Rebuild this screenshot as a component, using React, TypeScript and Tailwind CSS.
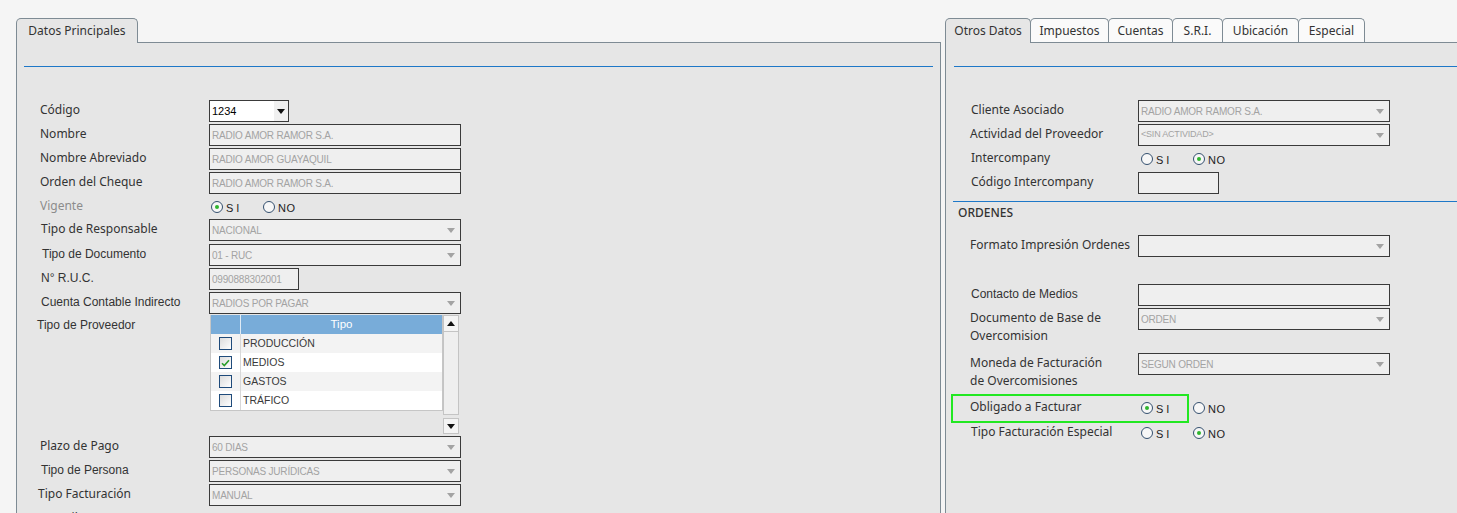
import React from "react";

const SANS = "font-['Noto_Sans',sans-serif]";
const ARIAL = "font-['Liberation_Sans',Arial,sans-serif]";

function Caret({ color = "#a3a3a3" }: { color?: string }) {
  return (
    <svg width="8" height="5" viewBox="0 0 8 5" className="flex-none">
      <path d="M0 0h8L4 5z" fill={color} />
    </svg>
  );
}

function Box({
  value = "",
  w = "w-[252px]",
  select = false,
  small = false,
}: {
  value?: string;
  w?: string;
  select?: boolean;
  small?: boolean;
}) {
  return (
    <div className={`${w} flex h-[22px] flex-none items-center border border-[#3a3a3a] bg-[#efefef] pl-[2px] pr-[5px]`}>
      <span
        className={`flex-1 truncate ${ARIAL} ${small ? "text-[9px]" : "text-[10px]"} tracking-[-0.2px] text-[#a3a3a3]`}
      >
        {value}
      </span>
      {select ? <Caret /> : null}
    </div>
  );
}

function Radio({ on = false, label }: { on?: boolean; label: string }) {
  return (
    <div className="flex w-[52px] flex-none items-center">
      <span className="flex h-[12px] w-[12px] items-center justify-center rounded-full border border-[#34506f] bg-[#f7f7f7]">
        {on ? <span className="h-[4px] w-[4px] rounded-full bg-[#2fb52f]" /> : null}
      </span>
      <span
        className={`mt-[3px] ml-[3px] ${ARIAL} text-[11px] text-[#222] ${label === "SI" ? "tracking-[3px]" : "tracking-[0.5px]"}`}
      >
        {label}
      </span>
    </div>
  );
}

function Radios({ si, pl = "pl-[2px]" }: { si: boolean; pl?: string }) {
  return (
    <div className={`flex h-[22px] items-center ${pl}`}>
      <Radio on={si} label="SI" />
      <Radio on={!si} label="NO" />
    </div>
  );
}

function Row({
  label,
  h,
  lcls = "pl-[23px]",
  children,
}: {
  label: React.ReactNode;
  h: string;
  lcls?: string;
  children?: React.ReactNode;
}) {
  return (
    <div className={`flex flex-none items-start ${h}`}>
      <div className={`flex h-[22px] w-[192px] flex-none items-center pb-[2px] text-[12px] text-[#333] ${lcls}`}>
        {label}
      </div>
      {children}
    </div>
  );
}

function Check({ on = false }: { on?: boolean }) {
  return (
    <span className="flex h-[13px] w-[13px] items-center justify-center border border-[#1f4b7b] bg-gradient-to-br from-[#dcdcdc] to-white">
      {on ? (
        <svg width="9" height="8" viewBox="0 0 9 8">
          <path d="M1 4.2l2.3 2.3L8 1.3" fill="none" stroke="#2a9d2a" strokeWidth="1.6" />
        </svg>
      ) : null}
    </span>
  );
}

function GridRow({ text, on = false, alt = false }: { text: string; on?: boolean; alt?: boolean }) {
  return (
    <div className={`flex h-[19px] ${alt ? "bg-[#f3f3f3]" : "bg-white"}`}>
      <div className="flex w-[30px] flex-none items-center justify-center border-r border-[#d8d8d8]">
        <Check on={on} />
      </div>
      <div className={`flex items-center pl-[2px] ${ARIAL} text-[10.5px] text-[#3a3a3a]`}>{text}</div>
    </div>
  );
}

function Tab({
  children,
  w,
  active = false,
  first = false,
}: {
  children: React.ReactNode;
  w: string;
  active?: boolean;
  first?: boolean;
}) {
  return (
    <div
      className={`${w} relative flex flex-none items-start justify-center rounded-t-[5px] border border-b-0 border-[#7e8b94] pt-[3px] ${SANS} text-[12px] text-[#333] ${
        active ? "z-20 h-[25px] bg-[#e6e6e6]" : "z-10 h-[24px] bg-[#fafafa]"
      } ${first ? "" : "-ml-px"}`}
    >
      {children}
    </div>
  );
}

export default function App() {
  return (
    <div className={`flex h-[513px] w-full gap-[4px] overflow-hidden bg-[#f5f5f5] pt-[18px] pl-[16px] ${SANS}`}>
      {/* Datos principales */}
      <div className="flex w-[925px] flex-none flex-col">
        <div className="flex h-[25px] flex-none items-start">
          <Tab w="w-[122px]" active first>
            Datos Principales
          </Tab>
        </div>
        <div className="-mt-px flex h-[490px] flex-none flex-col border border-[#7e8b94] bg-[#e6e6e6]">
          <div className="mx-[7px] mt-[23px] h-px flex-none bg-[#1e78c8]" />
          <div className="mt-[33px] flex flex-none flex-col">
            <Row label="Código" h="h-[24px]">
              <div className="flex h-[22px] w-[80px] items-center border border-[#3a3a3a] bg-white pl-[2px]">
                <span className={`flex-1 ${ARIAL} text-[11px] text-black`}>1234</span>
                <span className="flex h-full w-[14px] items-center justify-center bg-[#f0f0f0]">
                  <Caret color="#111" />
                </span>
              </div>
            </Row>
            <Row label="Nombre" h="h-[24px]">
              <Box value="RADIO AMOR RAMOR S.A." />
            </Row>
            <Row label="Nombre Abreviado" h="h-[24px]">
              <Box value="RADIO AMOR GUAYAQUIL" />
            </Row>
            <Row label="Orden del Cheque" h="h-[24px]">
              <Box value="RADIO AMOR RAMOR S.A." />
            </Row>
            <Row label="Vigente" h="h-[23px]" lcls="pl-[23px] text-[#8c8c8c]!">
              <Radios si />
            </Row>
            <Row label="Tipo de Responsable" h="h-[25px]" lcls="pl-[24px]">
              <Box value="NACIONAL" select />
            </Row>
            <Row label="Tipo de Documento" h="h-[24px]" lcls={`pl-[25px] ${ARIAL}`}>
              <Box value="01 - RUC" select />
            </Row>
            <Row label="N° R.U.C." h="h-[24px]" lcls={`pl-[24px] ${ARIAL}`}>
              <Box value="0990888302001" w="w-[90px]" />
            </Row>
            <Row label="Cuenta Contable Indirecto" h="h-[23px]" lcls={`pl-[24px] ${ARIAL}`}>
              <Box value="RADIOS POR PAGAR" select />
            </Row>
            <Row label="Tipo de Proveedor" h="h-[121px]" lcls={`pl-[20px] ${ARIAL}`}>
              <div className="ml-[1px] flex">
                <div className="flex w-[233px] flex-col self-start border-x border-b border-[#c6c6c6]">
                  <div className="flex h-[19px] bg-[#78acd9]">
                    <div className="w-[30px] flex-none border-r border-[#e0ebf5]" />
                    <div className={`flex flex-1 items-center justify-center ${ARIAL} text-[11.5px] text-white`}>
                      Tipo
                    </div>
                  </div>
                  <GridRow text="PRODUCCIÓN" alt />
                  <GridRow text="MEDIOS" on />
                  <GridRow text="GASTOS" alt />
                  <GridRow text="TRÁFICO" />
                </div>
                <div className="flex w-[16px] flex-col">
                  <div className="flex h-[17px] items-center justify-center border border-[#c4c4c4] bg-[#f4f4f4]">
                    <svg width="8" height="5" viewBox="0 0 8 5">
                      <path d="M0 5h8L4 0z" fill="#111" />
                    </svg>
                  </div>
                  <div className="h-[83px] border-x border-b border-[#c4c4c4] bg-[#efefef]" />
                  <div className="mt-[3px] flex h-[16px] items-center justify-center border border-[#c4c4c4] bg-[#f4f4f4]">
                    <Caret color="#111" />
                  </div>
                </div>
              </div>
            </Row>
            <Row label="Plazo de Pago" h="h-[24px]">
              <Box value="60 DIAS" select />
            </Row>
            <Row label="Tipo de Persona" h="h-[24px]" lcls={`pl-[24px] ${ARIAL}`}>
              <Box value="PERSONAS JURÍDICAS" select />
            </Row>
            <Row label="Tipo Facturación" h="h-[24px]" lcls="pl-[21px]">
              <Box value="MANUAL" select />
            </Row>
            <Row label="Contribuyente Pequeño" h="h-[24px]" lcls="pl-[23px]">
              <Radios si />
            </Row>
          </div>
        </div>
      </div>

      {/* Otros datos */}
      <div className="flex w-[540px] flex-none flex-col">
        <div className="flex h-[25px] flex-none items-start">
          <Tab w="w-[86px]" active first>
            Otros Datos
          </Tab>
          <Tab w="w-[79px]">Impuestos</Tab>
          <Tab w="w-[65px]">Cuentas</Tab>
          <Tab w="w-[51px]">S.R.I.</Tab>
          <Tab w="w-[77px]">Ubicación</Tab>
          <Tab w="w-[67px]">Especial</Tab>
        </div>
        <div className="-mt-px flex h-[490px] flex-none flex-col border border-[#7e8b94] bg-[#e6e6e6]">
          <div className="mx-[8px] mt-[23px] h-px flex-none bg-[#1e78c8]" />
          <div className="mt-[33px] flex flex-none flex-col">
            <Row label="Cliente Asociado" h="h-[24px]" lcls="pl-[25px]">
              <Box value="RADIO AMOR RAMOR S.A." select />
            </Row>
            <Row label="Actividad del Proveedor" h="h-[24px]" lcls="pl-[24px]">
              <Box value="<SIN ACTIVIDAD>" select small />
            </Row>
            <Row label="Intercompany" h="h-[24px]" lcls="pl-[25px]">
              <Radios si={false} pl="pl-[3px]" />
            </Row>
            <Row label="Código Intercompany" h="h-[29px]" lcls="pl-[25px]">
              <Box w="w-[81px]" />
            </Row>
            <div className="ml-[7px] h-px flex-none bg-[#1e78c8]" />
            <div className="flex h-[22px] flex-none items-center pl-[12px] text-[12px] font-medium text-[#333]">
              ORDENES
            </div>
            <div className="mt-[11px]" />
            <Row label="Formato Impresión Ordenes" h="h-[49px]" lcls="pl-[24px]">
              <Box select />
            </Row>
            <Row label="Contacto de Medios" h="h-[24px]" lcls={`pl-[25px] ${ARIAL}`}>
              <Box />
            </Row>
            <div className="flex h-[45px] flex-none items-start">
              <div className="w-[192px] flex-none pt-[1px] pl-[24px] text-[12px] leading-[18px] text-[#333]">
                Documento de Base de
                <br />
                Overcomision
              </div>
              <Box value="ORDEN" select />
            </div>
            <div className="flex h-[41px] flex-none items-start">
              <div className="w-[192px] flex-none pt-[1px] pl-[24px] text-[12px] leading-[18px] text-[#333]">
                Moneda de Facturación
                <br />
                de Overcomisiones
              </div>
              <Box value="SEGUN ORDEN" select />
            </div>
            <div className="relative flex h-[28px] flex-none items-center">
              <div className="flex w-[192px] flex-none items-center pb-[3px] pl-[24px] text-[12px] text-[#333]">
                Obligado a Facturar
              </div>
              <Radios si pl="pl-[3px]" />
              <div className="absolute top-0 left-[5px] h-[29px] w-[238px] border-2 border-[#22e822]" />
            </div>
            <Row label="Tipo Facturación Especial" h="h-[22px]" lcls="pl-[25px]">
              <Radios si={false} pl="pl-[3px]" />
            </Row>
          </div>
        </div>
      </div>
    </div>
  );
}
